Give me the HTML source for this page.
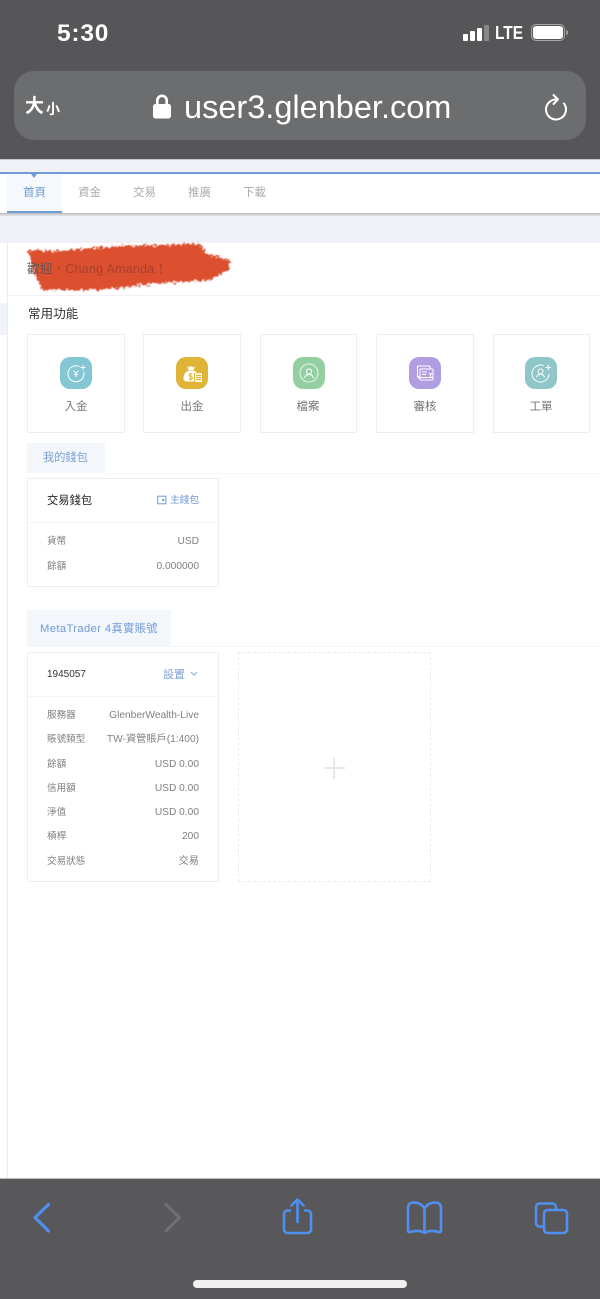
<!DOCTYPE html>
<html lang="zh-Hant">
<head>
<meta charset="utf-8">
<title>user3.glenber.com</title>
<style>
html,body{margin:0;padding:0;background:#fff}
body{width:600px;height:1299px;position:relative;overflow:hidden;font-family:"Liberation Sans","Noto Sans CJK TC",sans-serif;color:#666}
.a{position:absolute;white-space:nowrap}
.box{position:absolute;box-sizing:border-box;border:1px solid #eeeef1}
.ic{position:absolute;width:32px;height:32px;border-radius:10px;top:357px}
.ic svg{display:block}
.lb{position:absolute;top:398.500px;font-size:11.500px;line-height:16px;color:#777;text-align:center;width:98px}
.row{position:absolute;font-size:9.600px;line-height:14px;color:#808080}
.r{position:absolute;font-size:10.200px;line-height:14px;color:#808080;right:401px;white-space:nowrap}
.tab{position:absolute;top:186px;font-size:11.500px;line-height:15px;color:#aaa}
</style>
</head>
<body>
<!-- top chrome -->
<div class="a" style="left:0;top:0;width:600px;height:159px;background:#565658"></div>
<div class="a" style="left:57px;top:20px;font-size:24.500px;line-height:28px;font-weight:bold;color:#fff;letter-spacing:.8px">5:30</div>
<div class="a" style="left:463px;top:34px;width:4.500px;height:6.500px;background:#fff;border-radius:1px"></div>
<div class="a" style="left:470px;top:31px;width:4.500px;height:9.500px;background:#fff;border-radius:1px"></div>
<div class="a" style="left:477px;top:28px;width:4.500px;height:12.500px;background:#fff;border-radius:1px"></div>
<div class="a" style="left:484px;top:24.500px;width:4.500px;height:16px;background:#88888a;border-radius:1px"></div>
<div class="a" style="left:495px;top:23px;font-size:18px;line-height:20px;font-weight:bold;color:#fff;transform:scaleX(.86);transform-origin:0 0">LTE</div>
<div class="a" style="left:531px;top:24px;width:34px;height:17px;box-sizing:border-box;border:1px solid #a5a5a7;border-radius:5px"></div>
<div class="a" style="left:533px;top:26px;width:30px;height:13px;background:#fff;border-radius:3px"></div>
<div class="a" style="left:566px;top:30px;width:2px;height:5px;background:#99999b;border-radius:0 2px 2px 0"></div>

<div class="a" style="left:14px;top:71px;width:572px;height:69px;background:#6c6d6f;border-radius:20px"></div>
<div class="a" style="left:25px;top:95px;font-size:19px;line-height:24px;font-weight:bold;color:#fff">大</div>
<div class="a" style="left:46px;top:100px;font-size:14px;line-height:18px;font-weight:bold;color:#fff">小</div>
<svg class="a" style="left:152px;top:93px" width="20" height="26" viewBox="0 0 20 26">
<path d="M5.300 12V7.500a4.700 4.700 0 0 1 9.400 0V12" fill="none" stroke="#fff" stroke-width="2.700"/>
<rect x="1" y="11" width="18" height="14.500" rx="2.500" fill="#fff"/>
</svg>
<div class="a" style="left:184px;top:87px;font-size:32.500px;line-height:40px;color:#fff">user3.glenber.com</div>
<svg class="a" style="left:543px;top:93px" width="26" height="29" viewBox="0 0 26 29">
<path d="M12.500 6.500a10 10 0 1 0 8.500 4" fill="none" stroke="#fff" stroke-width="2" stroke-linecap="round"/>
<path d="M10.500 2l4.500 4.500-4.500 4.500" fill="none" stroke="#fff" stroke-width="2" stroke-linecap="round" stroke-linejoin="round"/>
</svg>

<!-- page bg and nav -->
<div class="a" style="left:0;top:159px;width:600px;height:84px;background:#eff1f6"></div>
<div class="a" style="left:0;top:159px;width:600px;height:1px;background:#c9c9cc"></div>
<div class="a" style="left:0;top:172px;width:600px;height:2px;background:#6f9bd6"></div>
<div class="a" style="left:0;top:174px;width:600px;height:39px;background:#fff"></div>
<div class="a" style="left:0;top:213px;width:600px;height:3px;background:linear-gradient(#b9babd,#e4e6ea)"></div>
<div class="a" style="left:7px;top:174px;width:55px;height:39px;box-sizing:border-box;background:#f5f8fc;border-bottom:2px solid #6f9bd6"></div>
<div class="a" style="left:31px;top:174px;width:0;height:0;border-left:3.500px solid transparent;border-right:3.500px solid transparent;border-top:4px solid #6f9bd6"></div>
<div class="tab" style="left:23px;color:#6f9bd6">首頁</div>
<div class="tab" style="left:78px">資金</div>
<div class="tab" style="left:133px">交易</div>
<div class="tab" style="left:188px">推廣</div>
<div class="tab" style="left:243px">下載</div>

<!-- sidebar -->
<div class="a" style="left:7px;top:243px;width:1px;height:935px;background:#ececf0"></div>
<div class="a" style="left:0;top:303px;width:7px;height:32px;background:#f0f3f9"></div>

<!-- welcome -->
<svg class="a" style="left:14px;top:234px" width="232" height="72" viewBox="-6 -6 232 72">
<defs><filter id="f" x="-10%" y="-30%" width="120%" height="160%">
<feTurbulence type="fractalNoise" baseFrequency=".35" numOctaves="3" seed="4" result="n"/>
<feDisplacementMap in="SourceGraphic" in2="n" scale="8" xChannelSelector="R" yChannelSelector="G"/>
<feGaussianBlur stdDeviation=".5"/>
</filter></defs>
<path filter="url(#f)" d="M8 10L37 11 100 6 180 4 187 14 211 20 208 30 190 40 140 43 80 50 22 50 14 33Z" fill="#d9411f" fill-opacity=".92"/>
</svg>
<div class="a" style="left:27px;top:261px;font-size:12.500px;line-height:17px;color:#555;letter-spacing:.25px">歡迎<span style="color:#a8402a">，Chang Amanda！</span></div>
<div class="a" style="left:8px;top:295px;width:592px;height:1px;background:#f1f2f4"></div>

<div class="a" style="left:28px;top:305px;font-size:12.500px;line-height:18px;color:#333;letter-spacing:.1px">常用功能</div>

<!-- function cards -->
<div class="box" style="left:27px;top:334px;width:98px;height:99px"></div>
<div class="box" style="left:143px;top:334px;width:98px;height:99px"></div>
<div class="box" style="left:260px;top:334px;width:97px;height:99px"></div>
<div class="box" style="left:376px;top:334px;width:98px;height:99px"></div>
<div class="box" style="left:493px;top:334px;width:97px;height:99px"></div>

<div class="ic" style="left:60px;background:#84c6d3"><svg width="32" height="32" viewBox="0 0 32 32" fill="none" stroke="#fff"><path d="M19.500 9.600A8 8 0 1 0 23.600 14.500" stroke-width="1"/><path d="M20.500 10.500h5M23 8v5" stroke-width="1"/><path d="M13.600 13.500l2.400 3 2.400-3M16 16.500v3.500M14 17.500h4" stroke-width="1"/></svg></div>
<div class="ic" style="left:176px;background:#dfb437"><svg width="32" height="32" viewBox="0 0 32 32"><path d="M11 9l2 1.400L15 9l2 1.400L19 9l-1.500 4h-5z" fill="#fff"/><path d="M12.500 13.500h5c3 1.500 5 4 5 7v4H11c-2.500 0-3.500-1.500-3.500-3.500 0-3 2-6 5-7.500z" fill="#fff"/><rect x="18" y="16" width="7.500" height="9" fill="#dfb437"/><rect x="19" y="16" width="7" height="9" fill="#fff" fill-opacity=".85"/><path d="M20 18.500h5M20 20.500h5M20 22.500h5" stroke="#dfb437" stroke-width=".9"/><path d="M16.500 17c-2-.8-3.500 0-3.500 1.200 0 1.800 3.500 1 3.500 2.800 0 1.300-1.800 1.800-3.500 1M14.800 16v7.500" stroke="#dfb437" stroke-width="1" fill="none"/></svg></div>
<div class="ic" style="left:293px;background:#94cfa2"><svg width="32" height="32" viewBox="0 0 32 32" fill="none" stroke="#fff"><circle cx="16" cy="16" r="9" stroke-width="1" opacity=".8"/><circle cx="16" cy="14.500" r="2.600" stroke-width="1"/><path d="M11.500 21c.8-2.500 2.500-3.600 4.500-3.600s3.700 1.100 4.500 3.600" stroke-width="1"/></svg></div>
<div class="ic" style="left:409px;background:#b09ee0"><svg width="32" height="32" viewBox="0 0 32 32" fill="none" stroke="#fff" stroke-width="1"><path d="M10.500 19.500H8.500V10a1 1 0 0 1 1-1h10.500a1 1 0 0 1 1 1v1.500"/><path d="M8.500 18.500c0 1.500 1 3 2.500 3"/><rect x="11" y="12" width="13" height="11" rx="1"/><path d="M13 15h5M13 17.500h4M20 16l1.500 1.500L23 16M21.500 17.500V20M11 20.500h13"/></svg></div>
<div class="ic" style="left:525px;background:#8ec6c9"><svg width="32" height="32" viewBox="0 0 32 32" fill="none" stroke="#fff" stroke-width="1"><path d="M18.500 8.600A8.500 8.500 0 1 0 24 17"/><path d="M20.500 10.500h5.500M23.200 7.800v5.500" stroke-width="1.100"/><circle cx="15.500" cy="14.500" r="2.500"/><path d="M11.500 20.500c.6-2.200 2.200-3.300 4-3.300s3.400 1.100 4 3.300"/></svg></div>

<div class="lb" style="left:27px">入金</div>
<div class="lb" style="left:143px">出金</div>
<div class="lb" style="left:259px">檔案</div>
<div class="lb" style="left:376px">審核</div>
<div class="lb" style="left:492px">工單</div>

<!-- wallet -->
<div class="a" style="left:27px;top:443px;width:78px;height:30px;background:#f3f6fb"></div>
<div class="a" style="left:105px;top:473px;width:495px;height:1px;background:#f5f6f8"></div>
<div class="a" style="left:43px;top:450px;font-size:11.200px;line-height:16px;color:#7aa0d2">我的錢包</div>
<div class="box" style="left:27px;top:478px;width:192px;height:109px;border-radius:2px"></div>
<div class="a" style="left:28px;top:522px;width:190px;height:1px;background:#f3f4f6"></div>
<div class="a" style="left:47px;top:492.500px;font-size:11.200px;line-height:16px;color:#222;letter-spacing:.1px">交易錢包</div>
<svg class="a" style="left:157px;top:495px" width="10" height="10" viewBox="0 0 10 10" fill="none" stroke="#6f9bd6"><rect x=".7" y="1.200" width="8.200" height="7.600" stroke-width="1"/><rect x="5.200" y="4" width="2.200" height="2" fill="#6f9bd6" stroke="none"/></svg>
<div class="a" style="left:170px;top:492.500px;font-size:9.700px;line-height:16px;color:#6f9bd6">主錢包</div>
<div class="row" style="left:47px;top:535px">貨幣</div>
<div class="r" style="top:535px">USD</div>
<div class="row" style="left:47px;top:560px">餘額</div>
<div class="r" style="top:560px">0.000000</div>

<!-- MT4 -->
<div class="a" style="left:27px;top:610px;width:144px;height:37px;background:#f3f6fb"></div>
<div class="a" style="left:171px;top:646px;width:429px;height:1px;background:#f5f6f8"></div>
<div class="a" style="left:40px;top:621px;font-size:11.200px;line-height:16px;color:#6f9bd6;letter-spacing:.4px">MetaTrader 4真實賬號</div>
<div class="box" style="left:27px;top:652px;width:192px;height:230px;border-radius:2px"></div>
<div class="a" style="left:28px;top:696px;width:190px;height:1px;background:#f3f4f6"></div>
<div class="a" style="left:47px;top:667px;font-size:10px;line-height:16px;color:#333">1945057</div>
<div class="a" style="left:163px;top:667px;font-size:11px;line-height:16px;color:#7aa0d2">設置</div>
<svg class="a" style="left:190px;top:671px" width="8" height="6" viewBox="0 0 8 6"><path d="M1 1l3 3.200L7 1" fill="none" stroke="#7aa0d2" stroke-width=".9"/></svg>

<div class="row" style="left:47px;top:709px">服務器</div>
<div class="r" style="top:709px">GlenberWealth-Live</div>
<div class="row" style="left:47px;top:733px">賬號類型</div>
<div class="r" style="top:733px">TW-資管賬戶(1:400)</div>
<div class="row" style="left:47px;top:758px">餘額</div>
<div class="r" style="top:758px">USD 0.00</div>
<div class="row" style="left:47px;top:782px">信用額</div>
<div class="r" style="top:782px">USD 0.00</div>
<div class="row" style="left:47px;top:806px">淨值</div>
<div class="r" style="top:806px">USD 0.00</div>
<div class="row" style="left:47px;top:830px">槓桿</div>
<div class="r" style="top:830px">200</div>
<div class="row" style="left:47px;top:855px">交易狀態</div>
<div class="r" style="top:855px">交易</div>

<div class="a" style="left:238px;top:652px;width:193px;height:230px;box-sizing:border-box;border:1px dashed #ececee"></div>
<div class="a" style="left:324px;top:767px;width:21px;height:2px;background:#e8e8ea"></div>
<div class="a" style="left:333px;top:758px;width:2px;height:21px;background:#e8e8ea"></div>

<!-- bottom chrome -->
<div class="a" style="left:0;top:1178px;width:600px;height:121px;background:#58585a"></div>
<div class="a" style="left:0;top:1178px;width:600px;height:1px;background:#bcbcbe"></div>
<svg class="a" style="left:0;top:1190px" width="600" height="60" viewBox="0 0 600 60" fill="none" stroke="#4f8ff2" stroke-width="2.600" stroke-linecap="round" stroke-linejoin="round">
<path d="M48.500 14.500L35 27.500l13.500 13.500" stroke-width="3.200"/>
<path d="M166 14.500L179.500 27.500 166 41" stroke="#6f6f71" stroke-width="3.200"/>
<path d="M290 20.500h-2.500a3.500 3.500 0 0 0-3.500 3.500v15.500a3.500 3.500 0 0 0 3.500 3.500h20a3.500 3.500 0 0 0 3.500-3.500V24a3.500 3.500 0 0 0-3.500-3.500H305"/>
<path d="M297.500 32V10.500M291.500 15.500l6-6 6 6"/>
<path d="M424.500 19c-2-4.500-6-6.500-11-6.500-3.500 0-5.500 2-5.500 5.500v22.500c0 1.500 1 2 2.200 1.500 5.500-1.500 11-1.500 14.300 1 3.300-2.500 8.800-2.500 14.300-1 1.200.5 2.200 0 2.200-1.500V18c0-3.500-2-5.500-5.500-5.500-5 0-9 2-11 6.500z"/>
<path d="M424.500 19v23.500"/>
<path d="M542 36.500h-2.500a3.500 3.500 0 0 1-3.500-3.500V17a3.500 3.500 0 0 1 3.500-3.500h13a3.500 3.500 0 0 1 3.500 3.500v3"/>
<rect x="544" y="20" width="23" height="23" rx="3.500"/>
</svg>
<div class="a" style="left:193px;top:1280px;width:214px;height:7.500px;background:#f0f0f0;border-radius:4px"></div>
</body>
</html>
